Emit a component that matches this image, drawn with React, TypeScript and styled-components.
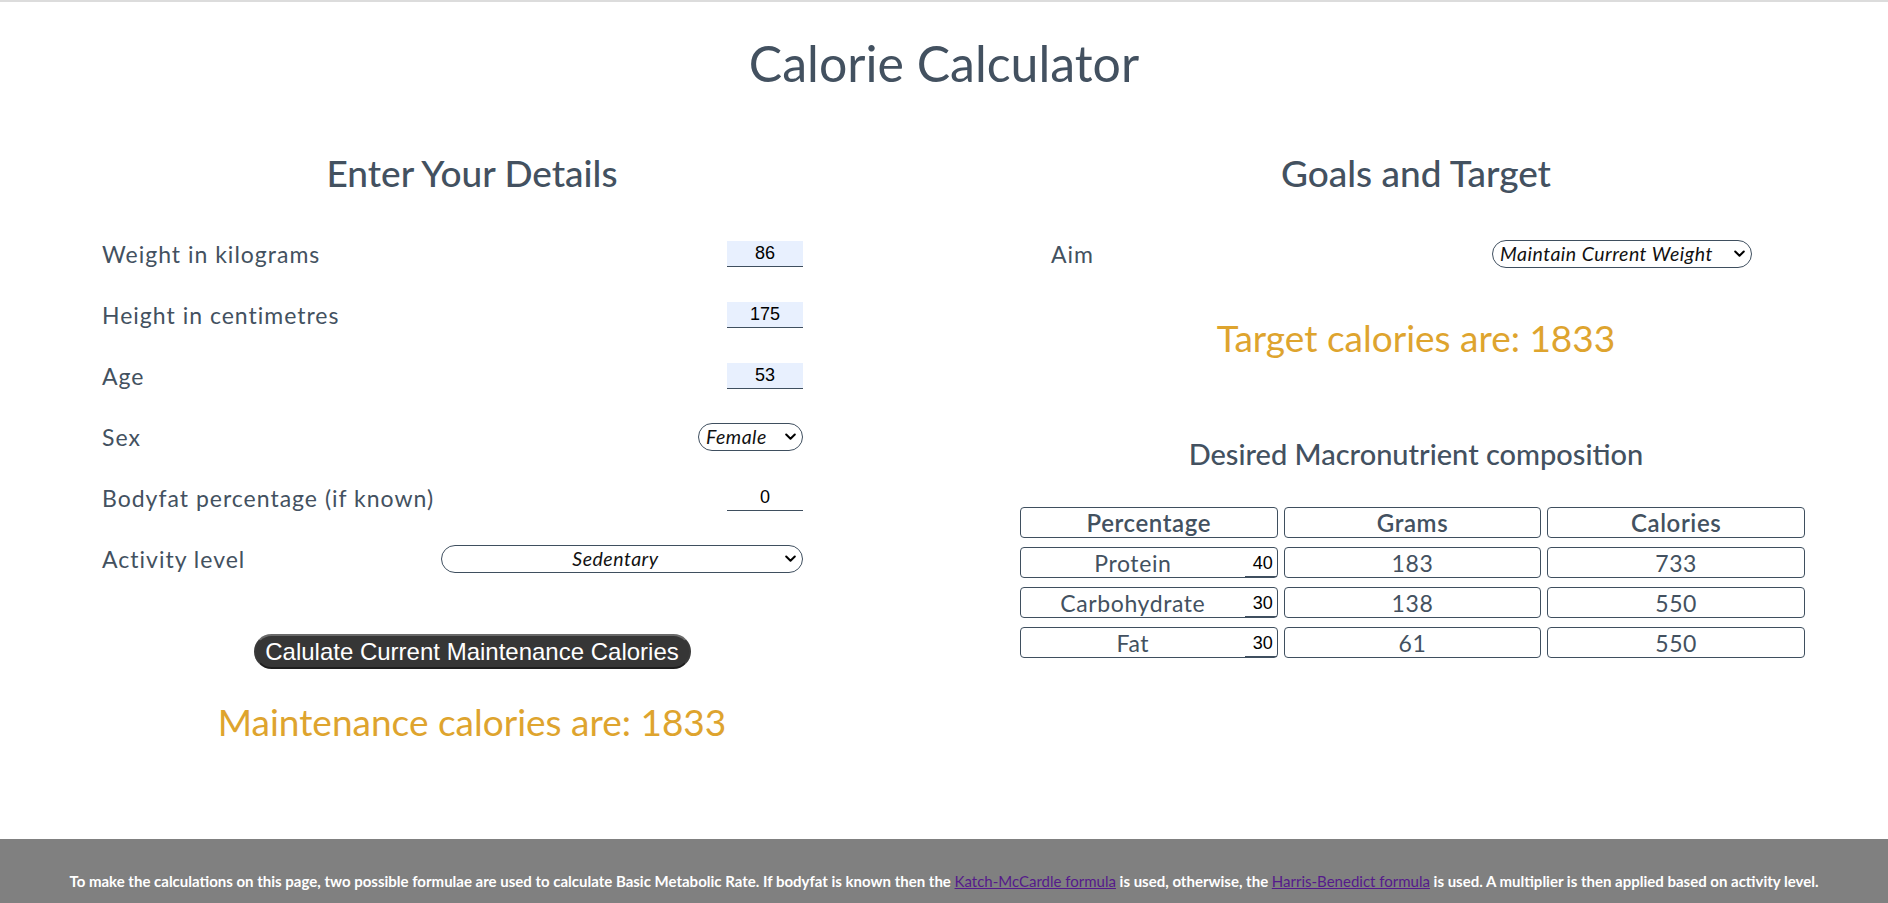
import React from "react";
import styled, { createGlobalStyle } from "styled-components";

const Global = createGlobalStyle`
  html, body { margin: 0; padding: 0; background: #ffffff; }
  body { font-family: Lato, "Open Sans", sans-serif; color: #435160; border-top: 2px solid #dcdcdc; }
  * { box-sizing: border-box; }
`;

const TEXT = "#435160";
const GOLD = "#dea42e";

const TitleBar = styled.header`
  height: 118px;
  padding-top: 21px;
`;

const Title = styled.h1`
  margin: 0;
  text-align: center;
  font-weight: 400;
  font-size: 50px;
  line-height: 80px;
  color: ${TEXT};
`;

const Columns = styled.main`
  height: 719px;
  display: grid;
  grid-template-columns: 944px 944px;
`;

const Column = styled.section`
  display: flex;
  flex-direction: column;
`;

const Heading = styled.h2`
  margin: 28px 0 25px 0;
  text-align: center;
  font-weight: 500;
  font-size: 37px;
  line-height: 50px;
  color: ${TEXT};
`;

const Rows = styled.div<{ $padLeft: number }>`
  margin-left: ${(p) => p.$padLeft}px;
  width: 701px;
  display: flex;
  flex-direction: column;
`;

const Row = styled.div`
  height: 61px;
  display: flex;
  align-items: center;
  justify-content: space-between;
`;

const Label = styled.label`
  font-size: 23px;
  letter-spacing: 1px;
  font-weight: 400;
  color: ${TEXT};
`;

const NumberInput = styled.input<{ $filled?: boolean }>`
  width: 76px;
  height: 26px;
  border: none;
  border-bottom: 1px solid #3f4f5f;
  background: ${(p) => (p.$filled ? "#e8f0fe" : "transparent")};
  font-family: "Liberation Sans", Arial, sans-serif;
  font-size: 18px;
  text-align: center;
  color: #000;
  padding: 0;
  outline: none;
`;

const SelectWrap = styled.div<{ $width: number }>`
  position: relative;
  width: ${(p) => p.$width}px;
  height: 28px;
`;

const Select = styled.select<{ $center?: boolean }>`
  appearance: none;
  -webkit-appearance: none;
  width: 100%;
  height: 100%;
  border: 1px solid #3f4f5f;
  border-radius: 14px;
  background: #fff;
  font-family: Lato, sans-serif;
  font-style: italic;
  font-weight: 400;
  font-size: 19.5px;
  letter-spacing: 0.5px;
  color: #111;
  text-align: ${(p) => (p.$center ? "center" : "left")};
  text-align-last: ${(p) => (p.$center ? "center" : "left")};
  padding: 0 20px 0 7px;
  outline: none;
`;

const Chevron = styled.svg`
  position: absolute;
  right: 7px;
  top: 10px;
  width: 11px;
  height: 8px;
  pointer-events: none;
`;

const ActionButton = styled.button`
  align-self: center;
  margin-top: 45px;
  width: 437px;
  height: 35px;
  border-radius: 18px;
  border: 2px solid;
  border-color: #6a6a6a #3a3a3a #1e1e1e #3a3a3a;
  background: #363636;
  color: #fff;
  font-family: "Liberation Sans", Arial, sans-serif;
  font-size: 24px;
  padding: 0 4px;
  white-space: nowrap;
  cursor: pointer;
`;

const Result = styled.p<{ $top: number }>`
  margin: ${(p) => p.$top}px 0 0 0;
  text-align: center;
  font-size: 37px;
  font-weight: 400;
  line-height: 50px;
  color: ${GOLD};
`;

const SubHeading = styled.h3`
  margin: 71px 0 33px 0;
  text-align: center;
  font-size: 29px;
  font-weight: 500;
  line-height: 40px;
  color: ${TEXT};
`;

const MacroGrid = styled.div`
  margin-left: 76px;
  width: 785px;
  display: grid;
  grid-template-columns: repeat(3, 1fr);
  column-gap: 6px;
  row-gap: 9px;
`;

const Cell = styled.div<{ $head?: boolean }>`
  height: 31px;
  border: 1px solid #3f4f5f;
  border-radius: 4px;
  display: flex;
  align-items: center;
  justify-content: center;
  font-size: ${(p) => (p.$head ? 24 : 23)}px;
  letter-spacing: 0.6px;
  font-weight: ${(p) => (p.$head ? 600 : 400)};
  color: ${TEXT};
`;

const CellLabel = styled.span`
  flex: 1;
  text-align: center;
`;

const PctInput = styled.input`
  width: 32px;
  height: 27px;
  margin-top: 2px;
  border: none;
  border-bottom: 1px solid #3f4f5f;
  background: transparent;
  font-family: "Liberation Sans", Arial, sans-serif;
  font-size: 18px;
  letter-spacing: 0;
  text-align: right;
  padding: 0 4px 0 0;
  color: #000;
  outline: none;
`;

const Footer = styled.footer`
  background: #808080;
  padding: 32px 20px 32px;
  text-align: center;
  color: #fff;
  font-size: 15px;
  font-weight: 700;
  line-height: 20px;
  a { color: #551a8b; font-weight: 400; }
`;

const macros = [
  { name: "Protein", pct: "40", grams: "183", cals: "733" },
  { name: "Carbohydrate", pct: "30", grams: "138", cals: "550" },
  { name: "Fat", pct: "30", grams: "61", cals: "550" },
];

type DropProps = {
  width: number;
  center?: boolean;
  value: string;
  options: string[];
};

function Dropdown({ width, center, value, options }: DropProps) {
  return (
    <SelectWrap $width={width}>
      <Select $center={center} defaultValue={value}>
        {options.map((o) => (
          <option key={o}>{o}</option>
        ))}
      </Select>
      <Chevron viewBox="0 0 11 8">
        <path d="M1.2 1.5 L5.5 5.8 L9.8 1.5" fill="none" stroke="#000" strokeWidth="2" strokeLinecap="round" strokeLinejoin="round" />
      </Chevron>
    </SelectWrap>
  );
}

export default function App() {
  return (
    <>
      <Global />
      <TitleBar>
        <Title>Calorie Calculator</Title>
      </TitleBar>
      <Columns>
        <Column>
          <Heading>Enter Your Details</Heading>
          <Rows $padLeft={102}>
            <Row>
              <Label>Weight in kilograms</Label>
              <NumberInput $filled defaultValue="86" />
            </Row>
            <Row>
              <Label>Height in centimetres</Label>
              <NumberInput $filled defaultValue="175" />
            </Row>
            <Row>
              <Label>Age</Label>
              <NumberInput $filled defaultValue="53" />
            </Row>
            <Row>
              <Label>Sex</Label>
              <Dropdown width={105} value="Female" options={["Male", "Female"]} />
            </Row>
            <Row>
              <Label>Bodyfat percentage (if known)</Label>
              <NumberInput defaultValue="0" />
            </Row>
            <Row>
              <Label>Activity level</Label>
              <Dropdown
                width={362}
                center
                value="Sedentary"
                options={["Sedentary", "Lightly Active", "Moderately Active", "Very Active", "Extremely Active"]}
              />
            </Row>
          </Rows>
          <ActionButton>Calulate Current Maintenance Calories</ActionButton>
          <Result $top={28}>Maintenance calories are: 1833</Result>
        </Column>
        <Column>
          <Heading>Goals and Target</Heading>
          <Rows $padLeft={107}>
            <Row>
              <Label>Aim</Label>
              <Dropdown
                width={260}
                value="Maintain Current Weight"
                options={["Lose Weight", "Maintain Current Weight", "Gain Weight"]}
              />
            </Row>
          </Rows>
          <Result $top={29}>Target calories are: 1833</Result>
          <SubHeading>Desired Macronutrient composition</SubHeading>
          <MacroGrid>
            <Cell $head>Percentage</Cell>
            <Cell $head>Grams</Cell>
            <Cell $head>Calories</Cell>
            {macros.map((m) => (
              <React.Fragment key={m.name}>
                <Cell>
                  <CellLabel>{m.name}</CellLabel>
                  <PctInput defaultValue={m.pct} />
                </Cell>
                <Cell>{m.grams}</Cell>
                <Cell>{m.cals}</Cell>
              </React.Fragment>
            ))}
          </MacroGrid>
        </Column>
      </Columns>
      <Footer>
        To make the calculations on this page, two possible formulae are used to calculate Basic Metabolic Rate. If bodyfat is known then the{" "}
        <a href="#katch">Katch-McCardle formula</a> is used, otherwise, the{" "}
        <a href="#harris">Harris-Benedict formula</a> is used. A multiplier is then applied based on activity level.
      </Footer>
    </>
  );
}
